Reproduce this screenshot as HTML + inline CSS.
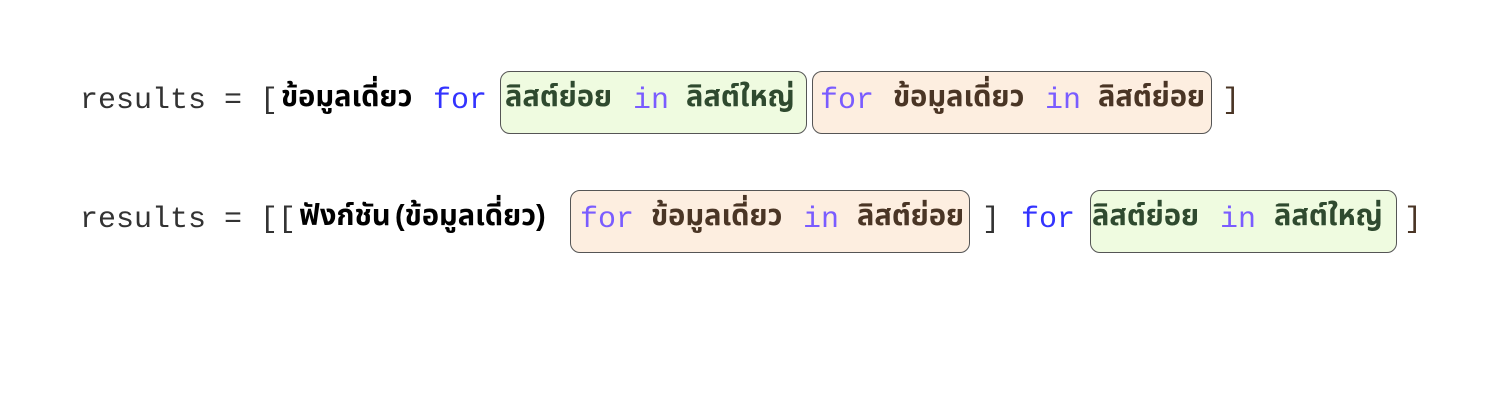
<!DOCTYPE html>
<html><head><meta charset="utf-8"><style>
body{margin:0;width:1504px;height:405px;background:#fff;position:relative;overflow:hidden}
.t{position:absolute;white-space:pre;line-height:1}
.m{font-family:"Courier New","Liberation Mono",monospace;font-size:30px}
.th{font-family:"Liberation Sans","Noto Sans Thai","Loma","Garuda",sans-serif;font-size:29px;font-weight:bold}
.box{position:absolute;border:1.5px solid #555;border-radius:10px;box-sizing:border-box}
.g{background:#effbe0}.o{background:#fdeee0}
.dk{color:#333}.bl{color:#3333ff}.pu{color:#7a5cff}.gr{color:#2f4a2f}.br{color:#4a3525}.k{color:#000}
</style></head><body>
<div class="box g" style="left:500px;top:71px;width:307px;height:63px"></div>
<div class="box o" style="left:812px;top:71px;width:400px;height:63px"></div>
<div class="box o" style="left:570px;top:190px;width:400px;height:63px"></div>
<div class="box g" style="left:1090px;top:190px;width:307px;height:63px"></div>

<span class="t m dk" style="left:80px;top:86px">results = [</span>
<span class="t th k" style="left:281px;top:83px">ข้อมูลเดี่ยว</span>
<span class="t m bl" style="left:433px;top:86px">for</span>
<span class="t th gr" style="left:505px;top:83px">ลิสต์ย่อย</span>
<span class="t m pu" style="left:633px;top:86px">in</span>
<span class="t th gr" style="left:686px;top:83px">ลิสต์ใหญ่</span>
<span class="t m pu" style="left:820px;top:86px">for</span>
<span class="t th br" style="left:893px;top:83px">ข้อมูลเดี่ยว</span>
<span class="t m pu" style="left:1045px;top:86px">in</span>
<span class="t th br" style="left:1098px;top:83px">ลิสต์ย่อย</span>
<span class="t m br" style="left:1222px;top:86px">]</span>

<span class="t m dk" style="left:80px;top:205px">results = [[</span>
<span class="t th k" style="left:299px;top:202px">ฟังก์ชัน</span>
<span class="t th k" style="left:395px;top:202px">(ข้อมูลเดี่ยว)</span>
<span class="t m pu" style="left:580px;top:205px">for</span>
<span class="t th br" style="left:651px;top:202px">ข้อมูลเดี่ยว</span>
<span class="t m pu" style="left:803px;top:205px">in</span>
<span class="t th br" style="left:857px;top:202px">ลิสต์ย่อย</span>
<span class="t m dk" style="left:982px;top:205px">]</span>
<span class="t m bl" style="left:1021px;top:205px">for</span>
<span class="t th gr" style="left:1092px;top:202px">ลิสต์ย่อย</span>
<span class="t m pu" style="left:1220px;top:205px">in</span>
<span class="t th gr" style="left:1274px;top:202px">ลิสต์ใหญ่</span>
<span class="t m br" style="left:1404px;top:205px">]</span>
</body></html>
